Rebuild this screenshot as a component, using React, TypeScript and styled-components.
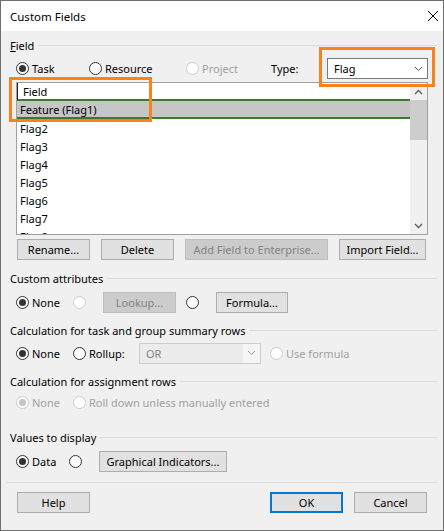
import React from 'react';
import styled, { createGlobalStyle } from 'styled-components';

const GlobalStyle = createGlobalStyle`
  html, body {
    margin: 0;
    padding: 0;
    background: #ffffff;
  }
  body {
    font-family: "Noto Sans", "Open Sans", sans-serif;
    font-size: 11px;
    color: #000000;
  }
`;

const Window = styled.div`
  position: relative;
  width: 444px;
  height: 531px;
  box-sizing: border-box;
  border: 1px solid #6f6f6f;
  background: #f0f0f0;
  display: flex;
  flex-direction: column;
`;

const TitleBar = styled.div`
  height: 30px;
  flex: none;
  background: #ffffff;
  display: flex;
  align-items: center;
  justify-content: space-between;
  padding: 0 5px 0 9px;
  font-size: 11.5px;
`;

const CloseIcon = styled.svg`
  width: 10px;
  height: 10px;
`;

const Body = styled.div`
  display: flex;
  flex-direction: column;
  padding: 0 6px;
`;

const GroupHeader = styled.div<{ $mt: number }>`
  display: flex;
  align-items: center;
  height: 16px;
  margin-top: ${({ $mt }) => $mt}px;
  padding-left: 3px;

  &::after {
    content: '';
    flex: 1;
    height: 1px;
    margin-left: 4px;
    background: #dcdcdc;
  }
`;

const Row = styled.div<{ $mt: number; $h: number }>`
  display: flex;
  align-items: center;
  height: ${({ $h }) => $h}px;
  margin-top: ${({ $mt }) => $mt}px;
  padding-left: 9px;
`;

const RadioItem = styled.label<{ $w?: number; $disabled?: boolean }>`
  display: flex;
  align-items: center;
  gap: 3px;
  width: ${({ $w }) => ($w ? `${$w}px` : 'auto')};
  flex: none;
  color: ${({ $disabled }) => ($disabled ? '#a0a0a0' : '#000000')};
`;

const RadioCircle = styled.span<{ $checked?: boolean; $disabled?: boolean }>`
  width: 13px;
  height: 13px;
  box-sizing: border-box;
  border-radius: 50%;
  border: 1px solid ${({ $disabled }) => ($disabled ? '#cccccc' : '#333333')};
  background: #ffffff;
  display: inline-flex;
  align-items: center;
  justify-content: center;
  flex: none;

  &::after {
    content: '';
    display: ${({ $checked }) => ($checked ? 'block' : 'none')};
    width: 7px;
    height: 7px;
    border-radius: 50%;
    background: ${({ $disabled }) => ($disabled ? '#c4c4c4' : '#333333')};
  }
`;

const TypeLabel = styled.span`
  width: 56px;
  flex: none;
`;

const Select = styled.div<{ $w: number; $disabled?: boolean }>`
  width: ${({ $w }) => $w}px;
  height: 21px;
  box-sizing: border-box;
  flex: none;
  display: flex;
  align-items: center;
  border: 1px solid ${({ $disabled }) => ($disabled ? '#cccccc' : '#7a7a7a')};
  background: ${({ $disabled }) => ($disabled ? '#ececec' : '#ffffff')};
  color: ${({ $disabled }) => ($disabled ? '#838383' : '#000000')};
`;

const SelectText = styled.span`
  flex: 1;
  padding-left: 6px;
`;

const SelectArrow = styled.span<{ $disabled?: boolean }>`
  width: 17px;
  align-self: stretch;
  display: flex;
  align-items: center;
  justify-content: center;
  background: ${({ $disabled }) => ($disabled ? '#f5f5f5' : 'transparent')};
`;

const ListBox = styled.div`
  height: 153px;
  margin: 2px 9px 0 9px;
  box-sizing: border-box;
  border: 1px solid #a0a0a0;
  background: #ffffff;
  display: flex;
  overflow: hidden;
`;

const ListBody = styled.div`
  flex: 1;
  display: flex;
  flex-direction: column;
  overflow: hidden;
`;

const ListHeader = styled.div`
  height: 16px;
  flex: none;
  display: flex;
  align-items: flex-end;
  padding-left: 5px;
  border-left: 1px solid #222222;
  border-bottom: 2px solid #3a7a2e;
`;

const ListRow = styled.div<{ $selected?: boolean }>`
  height: 18px;
  flex: none;
  box-sizing: border-box;
  display: flex;
  align-items: center;
  padding-left: 3px;
  background: ${({ $selected }) => ($selected ? '#c6c6c6' : '#ffffff')};
  border-bottom: ${({ $selected }) => ($selected ? '2px solid #3a7a2e' : 'none')};
`;

const ScrollBar = styled.div`
  width: 17px;
  flex: none;
  display: flex;
  flex-direction: column;
  background: #f0f0f0;
`;

const ScrollArrow = styled.div`
  height: 17px;
  flex: none;
  display: flex;
  align-items: center;
  justify-content: center;
`;

const ScrollThumb = styled.div`
  height: 40px;
  flex: none;
  background: #cdcdcd;
`;

const ScrollTrack = styled.div`
  flex: 1;
`;

const ButtonRow = styled.div<{ $mt: number }>`
  display: flex;
  align-items: center;
  margin-top: ${({ $mt }) => $mt}px;
  padding: 0 10px;
  gap: 11px;
`;

const Button = styled.button<{ $w: number; $disabled?: boolean; $primary?: boolean }>`
  width: ${({ $w }) => $w}px;
  height: 21px;
  box-sizing: border-box;
  flex: none;
  padding: 0;
  font: inherit;
  background: ${({ $disabled }) => ($disabled ? '#cccccc' : '#e1e1e1')};
  border: ${({ $primary }) => ($primary ? '2px' : '1px')} solid
    ${({ $disabled, $primary }) => ($primary ? '#0078d7' : $disabled ? '#bfbfbf' : '#adadad')};
  color: ${({ $disabled }) => ($disabled ? '#838383' : '#000000')};
  cursor: default;
`;

const Spacer = styled.div<{ $w?: number }>`
  width: ${({ $w }) => ($w ? `${$w}px` : 'auto')};
  flex: ${({ $w }) => ($w ? 'none' : '1')};
`;

const Separator = styled.div`
  height: 1px;
  margin-top: 11px;
  background: #dcdcdc;
`;

const Highlight = styled.div<{ $x: number; $y: number; $w: number; $h: number }>`
  position: absolute;
  left: ${({ $x }) => $x}px;
  top: ${({ $y }) => $y}px;
  width: ${({ $w }) => $w}px;
  height: ${({ $h }) => $h}px;
  box-sizing: border-box;
  border: 3px solid #f7831f;
  pointer-events: none;
`;

const Chevron = ({ up, color = '#606060', w = 1.4 }: { up?: boolean; color?: string; w?: number }) => (
  <svg width="9" height="6" viewBox="0 0 9 6">
    <polyline
      points={up ? '1,5 4.5,1.5 8,5' : '1,1 4.5,4.5 8,1'}
      fill="none"
      stroke={color}
      strokeWidth={w}
    />
  </svg>
);

const Radio = ({
  label,
  checked,
  disabled,
  w,
}: {
  label?: string;
  checked?: boolean;
  disabled?: boolean;
  w?: number;
}) => (
  <RadioItem $w={w} $disabled={disabled}>
    <RadioCircle $checked={checked} $disabled={disabled} />
    {label && <span>{label}</span>}
  </RadioItem>
);

const flags = ['Flag2', 'Flag3', 'Flag4', 'Flag5', 'Flag6', 'Flag7', 'Flag8'];

export default function App() {
  return (
    <>
      <GlobalStyle />
      <Window>
        <TitleBar>
          <span>Custom Fields</span>
          <CloseIcon viewBox="0 0 10 10">
            <line x1="0" y1="0" x2="10" y2="10" stroke="#000" strokeWidth="1" />
            <line x1="10" y1="0" x2="0" y2="10" stroke="#000" strokeWidth="1" />
          </CloseIcon>
        </TitleBar>
        <Body>
          <GroupHeader $mt={6}>
            <span>
              <u>F</u>ield
            </span>
          </GroupHeader>
          <Row $mt={4} $h={23}>
            <Radio label="Task" checked w={73} />
            <Radio label="Resource" w={97} />
            <Radio label="Project" disabled w={85} />
            <TypeLabel>Type:</TypeLabel>
            <Select $w={101}>
              <SelectText>Flag</SelectText>
              <SelectArrow>
                <Chevron color="#555" w={1} />
              </SelectArrow>
            </Select>
          </Row>
          <ListBox>
            <ListBody>
              <ListHeader>Field</ListHeader>
              <ListRow $selected>Feature (Flag1)</ListRow>
              {flags.map((f) => (
                <ListRow key={f}>{f}</ListRow>
              ))}
            </ListBody>
            <ScrollBar>
              <ScrollArrow>
                <Chevron up />
              </ScrollArrow>
              <ScrollThumb />
              <ScrollTrack />
              <ScrollArrow>
                <Chevron />
              </ScrollArrow>
            </ScrollBar>
          </ListBox>
          <ButtonRow $mt={4}>
            <Button $w={73}>Rename...</Button>
            <Button $w={73}>Delete</Button>
            <Button $w={143} $disabled>
              Add Field to Enterprise...
            </Button>
            <Button $w={87}>Import Field...</Button>
          </ButtonRow>

          <GroupHeader $mt={10}>Custom attributes</GroupHeader>
          <Row $mt={6} $h={21}>
            <Radio label="None" checked w={57} />
            <Radio disabled w={30} />
            <Button $w={73} $disabled>
              Lookup...
            </Button>
            <Spacer $w={10} />
            <Radio w={30} />
            <Button $w={72}>Formula...</Button>
          </Row>

          <GroupHeader $mt={9}>Calculation for task and group summary rows</GroupHeader>
          <Row $mt={4} $h={22}>
            <Radio label="None" checked w={57} />
            <Radio label="Rollup:" w={66} />
            <Select $w={122} $disabled>
              <SelectText>OR</SelectText>
              <SelectArrow $disabled>
                <Chevron color="#9a9a9a" w={1} />
              </SelectArrow>
            </Select>
            <Spacer $w={9} />
            <Radio label="Use formula" disabled />
          </Row>

          <GroupHeader $mt={9}>Calculation for assignment rows</GroupHeader>
          <Row $mt={3} $h={20}>
            <Radio label="None" checked disabled w={57} />
            <Radio label="Roll down unless manually entered" disabled />
          </Row>

          <GroupHeader $mt={17}>Values to display</GroupHeader>
          <Row $mt={6} $h={20}>
            <Radio label="Data" checked w={53} />
            <Radio w={30} />
            <Button $w={128}>Graphical Indicators...</Button>
          </Row>

          <Separator />
          <ButtonRow $mt={9}>
            <Button $w={73}>Help</Button>
            <Spacer />
            <Button $w={73} $primary>
              OK
            </Button>
            <Button $w={73}>Cancel</Button>
          </ButtonRow>
        </Body>
        <Highlight $x={8} $y={76} $w={143} $h={45} />
        <Highlight $x={318} $y={46} $w={116} $h={40} />
      </Window>
    </>
  );
}
